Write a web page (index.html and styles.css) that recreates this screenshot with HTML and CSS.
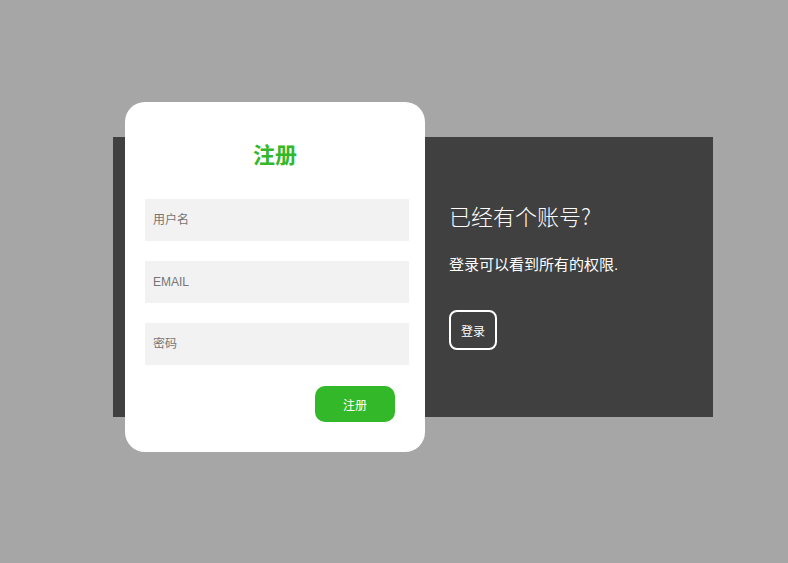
FILE: index.html
```html
<!DOCTYPE html>
<html lang="zh-CN">
<head>
<meta charset="utf-8">
<title>注册</title>
<link rel="stylesheet" href="styles.css">
</head>
<body>
<div class="page">
  <div class="panel">
    <form class="card">
      <h2 class="card-title">注册</h2>
      <input class="field" type="text" placeholder="用户名">
      <input class="field" type="text" placeholder="EMAIL">
      <input class="field" type="password" placeholder="密码">
      <div class="actions">
        <button class="btn-primary" type="button">注册</button>
      </div>
    </form>
    <div class="side">
      <h2 class="side-title">已经有个账号?</h2>
      <p class="side-text">登录可以看到所有的权限.</p>
      <button class="btn-outline" type="button">登录</button>
    </div>
  </div>
</div>
</body>
</html>
```

FILE: styles.css
```css
html, body {
  margin: 0;
  padding: 0;
}
body {
  background: #a6a6a6;
  font-family: "Liberation Sans", "Noto Sans CJK SC", sans-serif;
  width: 788px;
  height: 563px;
  overflow: hidden;
}
.page {
  padding: 137px 0 0 113px;
}
.panel {
  width: 600px;
  height: 280px;
  background: #404040;
  display: flex;
  align-items: center;
}
.card {
  box-sizing: border-box;
  width: 300px;
  height: 350px;
  flex: none;
  margin-left: 12px;
  background: #fff;
  border-radius: 20px;
  padding: 42px 0 0 20px;
  display: flex;
  flex-direction: column;
}
.card-title {
  margin: 0 0 31px;
  padding-right: 20px;
  text-align: center;
  font-size: 22px;
  line-height: 24px;
  font-weight: bold;
  color: #33b82a;
}
.field {
  box-sizing: border-box;
  width: 264px;
  height: 42px;
  margin: 0 0 20px;
  border: none;
  outline: none;
  background: #f2f2f2;
  padding: 0 8px;
  font-family: "Liberation Sans", "Noto Sans CJK SC", sans-serif;
  font-size: 12px;
  color: #333;
}
.field::placeholder {
  color: #757575;
}
.actions {
  display: flex;
  justify-content: flex-end;
  width: 250px;
  margin-top: 1px;
}
.btn-primary {
  box-sizing: border-box;
  width: 80px;
  height: 36px;
  border: none;
  border-radius: 10px;
  background: #33b82a;
  color: #fff;
  font-family: "Liberation Sans", "Noto Sans CJK SC", sans-serif;
  font-size: 12px;
  line-height: 16px;
  padding: 4px 0 0;
}
.side {
  align-self: stretch;
  padding: 63px 0 0 24px;
  color: #fff;
}
.side-title {
  margin: 0;
  font-family: "Noto Sans CJK SC", sans-serif;
  font-size: 22px;
  line-height: 30px;
  font-weight: 300;
}
.side-text {
  margin: 25px 0 0;
  font-size: 15px;
  line-height: 20px;
}
.btn-outline {
  margin-top: 35px;
  box-sizing: border-box;
  width: 48px;
  height: 40px;
  border: 2px solid #fff;
  border-radius: 8px;
  background: transparent;
  color: #fff;
  font-family: "Liberation Sans", "Noto Sans CJK SC", sans-serif;
  font-size: 12px;
  padding: 0;
}
```
